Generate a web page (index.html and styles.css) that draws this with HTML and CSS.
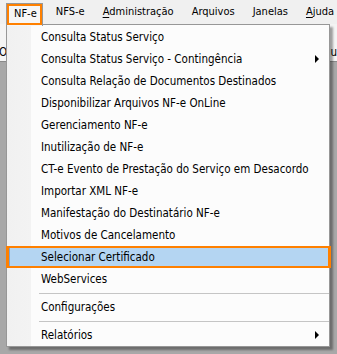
FILE: index.html
```html
<!DOCTYPE html>
<html lang="pt-br">
<head>
    <meta charset="UTF-8">
    <meta name="viewport" content="width=device-width, initial-scale=1.0">
    <title>Menu NF-e</title>
    <link rel="stylesheet" href="styles.css">
</head>
<body>
    <div class="menubar">
        <div class="menubar-item active">NF-e</div>
        <div class="menubar-item">NFS-e</div>
        <div class="menubar-item"><u>A</u>dministração</div>
        <div class="menubar-item">Arquivos</div>
        <div class="menubar-item">Janelas</div>
        <div class="menubar-item"><u>A</u>juda</div>
    </div>

    <div class="toolbar">
        <span class="toolbar-left">Oı</span>
        <span class="toolbar-right"><span class="tool-icon"></span>ju</span>
    </div>
    <div class="workspace"></div>

    <div class="dropdown">
        <div class="item">Consulta Status Serviço</div>
        <div class="item">Consulta Status Serviço - Contingência<span class="arrow"></span></div>
        <div class="item">Consulta Relação de Documentos Destinados</div>
        <div class="item">Disponibilizar Arquivos NF-e OnLine</div>
        <div class="item">Gerenciamento NF-e</div>
        <div class="item">Inutilização de NF-e</div>
        <div class="item">CT-e Evento de Prestação do Serviço em Desacordo</div>
        <div class="item">Importar XML NF-e</div>
        <div class="item">Manifestação do Destinatário NF-e</div>
        <div class="item">Motivos de Cancelamento</div>
        <div class="item selected">Selecionar Certificado</div>
        <div class="item">WebServices</div>
        <div class="separator"></div>
        <div class="item">Configurações</div>
        <div class="separator"></div>
        <div class="item">Relatórios<span class="arrow"></span></div>
    </div>
</body>
</html>
```

FILE: styles.css
```css
body {
    margin: 0;
    width: 337px;
    height: 354px;
    overflow: hidden;
    position: relative;
    background-color: #a8a8a8;
    font-family: "DejaVu Sans Condensed", "DejaVu Sans", sans-serif;
    font-size: 11.5px;
    color: #000000;
}

.menubar {
    height: 24px;
    background-color: #f0f0f0;
    display: flex;
    gap: 5px;
    padding-left: 6px;
    box-sizing: border-box;
    white-space: nowrap;
    font-size: 11px;
}

.menubar-item {
    flex-shrink: 0;
    padding: 0 5px 0 8px;
    line-height: 24px;
}

.menubar-item u {
    text-decoration-thickness: 1px;
    text-underline-offset: 2px;
}

/* aba aberta do menu NF-e */
.menubar-item.active {
    position: relative;
    z-index: 2;
    margin-top: 3px;
    height: 22px;
    line-height: 19px;
    border: 1px solid #979797;
    border-bottom: none;
    background-color: #f6f6f6;
    padding: 0 5px 0 7px;
}

.menubar-item.active::after {
    content: "";
    position: absolute;
    left: 0;
    top: 0;
    right: 0;
    bottom: 1px;
    border: 2px solid #ff8000;
}

.toolbar {
    height: 38px;
    background-color: #f4f4f4;
    border-bottom: 1px solid #8a8a8a;
    display: flex;
    justify-content: space-between;
    align-items: flex-end;
    padding-bottom: 2px;
    box-sizing: border-box;
    white-space: nowrap;
}

.toolbar-left {
    margin-left: -1px;
}

.toolbar-right {
    display: flex;
    align-items: flex-end;
}

.tool-icon {
    width: 6px;
    height: 14px;
    background: linear-gradient(#4a86c8, #e8a040);
    margin-right: 1px;
}

.dropdown {
    position: absolute;
    z-index: 1;
    left: 6px;
    top: 24px;
    width: 324px;
    height: 323px;
    box-sizing: border-box;
    border: 1px solid #979797;
    padding-top: 1px;
    background: linear-gradient(to right, #f1f1f1 0, #f3f3f3 24px, #fcfcfc 24px);
    box-shadow: 3px 3px 2px rgba(0, 0, 0, 0.35);
}

.item {
    height: 22px;
    line-height: 22px;
    padding: 0 10px 0 34px;
    display: flex;
    align-items: center;
    white-space: nowrap;
}

.item.selected {
    margin: 0 -2px 0 -1px;
    padding-left: 32px;
    box-sizing: border-box;
    border: 2px solid #ff8000;
    border-left-width: 3px;
    border-right-width: 3px;
    background-color: #b4d5f2;
    box-shadow: inset 1px 0 0 #7ba3d4;
}

.arrow {
    margin-left: auto;
    width: 0;
    height: 0;
    border-left: 4px solid #000000;
    border-top: 4px solid transparent;
    border-bottom: 4px solid transparent;
}

.separator {
    height: 6px;
    display: flex;
    align-items: center;
    padding-left: 32px;
}

.separator::before {
    content: "";
    flex: 1;
    height: 1px;
    background-color: #c5c5c5;
}
```
